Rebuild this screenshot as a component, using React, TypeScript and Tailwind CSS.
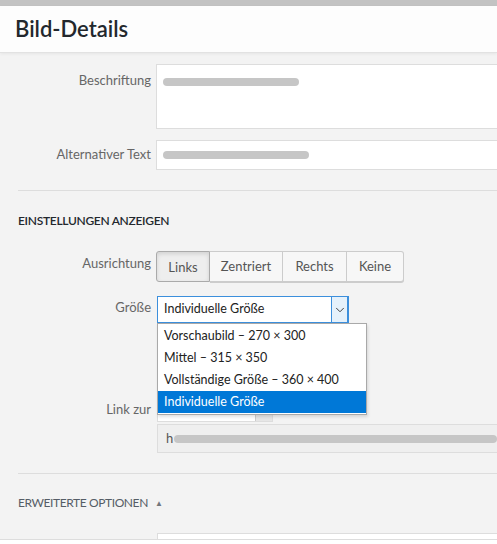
import { ChevronDown } from "lucide-react";

const font = { fontFamily: 'Lato, "Noto Sans", sans-serif' };

const sizes = [
  "Vorschaubild – 270 × 300",
  "Mittel – 315 × 350",
  "Vollständige Größe – 360 × 400",
  "Individuelle Größe",
];

function Smudge({ className }: { className: string }) {
  return <div className={`h-[8px] rounded-full bg-[#c6c6c6] blur-[0.6px] ${className}`} />;
}

function Label({ children, className = "" }: { children: React.ReactNode; className?: string }) {
  return <div className={`w-[156px] shrink-0 pr-[5px] text-right text-[13px] text-[#666] ${className}`}>{children}</div>;
}

export default function App() {
  return (
    <div className="h-[544px] w-[497px] overflow-hidden bg-[#f3f3f3] text-[#32373c]" style={font}>
      <div className="h-[6px] bg-[#c3c3c3]" />
      <div className="flex h-[47px] items-center border-b border-[#e2e2e2] bg-[#fdfdfd] pl-[15px] shadow-[0_1px_3px_rgba(0,0,0,0.06)]">
        <h1 className="text-[22px] font-semibold leading-none text-[#23282d]">Bild-Details</h1>
      </div>

      <div className="pt-[11px]">
        <div className="flex">
          <Label className="pt-[7px]">Beschriftung</Label>
          <div className="h-[65px] flex-1 border border-r-0 border-[#ddd] bg-white pl-[6px] pt-[13px]">
            <Smudge className="w-[136px]" />
          </div>
        </div>
        <div className="mt-[11px] flex items-center">
          <Label>Alternativer Text</Label>
          <div className="flex h-[30px] flex-1 items-center border border-r-0 border-[#ddd] bg-white pl-[6px]">
            <Smudge className="w-[146px]" />
          </div>
        </div>

        <div className="ml-[18px] mt-[20px] border-t border-[#dddddd]" />

        <h2 className="ml-[18px] mt-[21px] text-[12px] font-semibold leading-[18px] tracking-[-0.3px] text-[#23282d]">
          EINSTELLUNGEN ANZEIGEN
        </h2>

        <div className="mt-[21px] flex items-center">
          <Label className="-mt-[6px]">Ausrichtung</Label>
          <div className="flex h-[31px] text-[13px] text-[#555]">
            {["Links", "Zentriert", "Rechts", "Keine"].map((a, i) => (
              <div
                key={a}
                className={
                  i === 0
                    ? "flex w-[54px] items-center justify-center rounded-l-[3px] border border-[#aaa] bg-[#eee] pt-[3px] shadow-[inset_0_2px_4px_rgba(0,0,0,0.12)]"
                    : `flex items-center justify-center border border-l-0 border-[#ccc] bg-[#f7f7f7] shadow-[0_1px_0_#ccc] ${
                        i === 1 ? "w-[73px]" : i === 2 ? "w-[64px]" : "w-[57px] rounded-r-[3px]"
                      }`
                }
              >
                {a}
              </div>
            ))}
          </div>
        </div>

        <div className="relative mt-[14px]">
          <div className="flex items-center">
            <Label className="-mt-[4px]">Größe</Label>
            <div className="ml-px flex h-[27px] w-[192px] items-center border border-[#3c8fdc] bg-white pl-[6px] text-[12.5px] text-[#222]">
              <span className="flex-1">Individuelle Größe</span>
              <div className="flex h-[27px] w-[17px] items-center justify-center border border-[#3c8fdc] bg-[#e5f1fb]">
                <ChevronDown size={14} strokeWidth={1.6} className="text-[#333]" />
              </div>
            </div>
          </div>

          <div className="mt-[80px] flex items-center">
            <Label className="-mt-[6px]">Link zur</Label>
            <div className="ml-px flex h-[19px] w-[116px] justify-end border border-[#ddd] bg-white">
              <div className="h-full w-[17px] border-l border-[#ccc] bg-[#e6e6e6]" />
            </div>
          </div>

          <div className="ml-[157px] mt-[2px] flex h-[29px] items-center border border-r-0 border-[#ddd] bg-[#efefef] pl-[8px] text-[13px] text-[#555]">
            <span>h</span>
            <Smudge className="ml-px w-full" />
          </div>

          <div className="absolute left-[157px] top-[27px] w-[210px] border border-[#a9a9a9] bg-white py-px text-[12.5px] text-[#222] shadow-[1px_2px_3px_rgba(0,0,0,0.12)]">
            {sizes.map((s, i) => (
              <div
                key={s}
                className={`flex h-[22px] items-center pl-[6px] ${i === 3 ? "bg-[#0078d7] text-white" : ""}`}
              >
                {s}
              </div>
            ))}
          </div>
        </div>

        <div className="ml-[18px] mt-[20px] border-t border-[#dddddd]" />

        <h2 className="ml-[18px] mt-[20px] flex items-center gap-[7px] text-[12px] leading-[18px] tracking-[-0.4px] text-[#555d66]">
          ERWEITERTE OPTIONEN
          <span className="text-[8px] text-[#72777c]">▲</span>
        </h2>

        <div className="ml-[157px] mt-[21px] h-[6px] border border-b-0 border-r-0 border-[#ddd] bg-white" />
        <div className="h-[10px] border-t border-[#ddd] bg-white" />
      </div>
    </div>
  );
}
